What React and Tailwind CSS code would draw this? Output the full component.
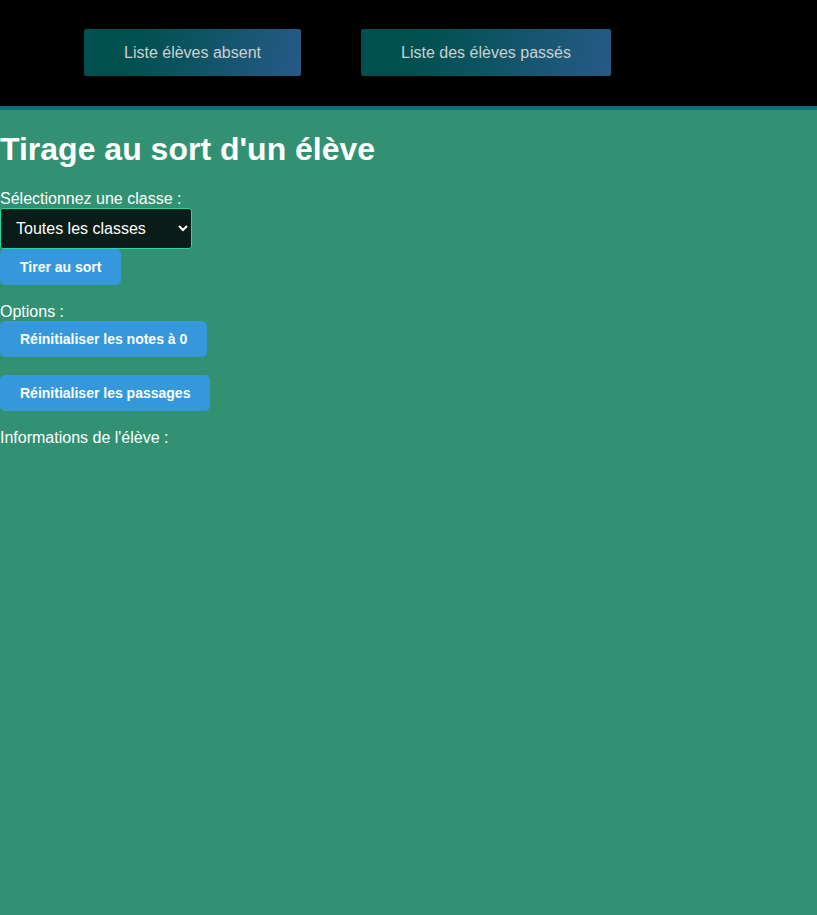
export default function App() {
  return (
    <div className="min-h-[915px] bg-[#329172] text-white font-['Liberation_Sans',Arial,sans-serif]">
      {/* top bar */}
      <nav className="h-[110px] bg-black border-b-4 border-[#0e6d72] flex items-start pt-[29px] pl-[84px] gap-[60px]">
        <button className="w-[217px] h-[47px] rounded-[2px] bg-linear-[105deg] from-[#015050] from-25% to-[#265a88] text-[#c9d1d1] text-base">
          Liste élèves absent
        </button>
        <button className="w-[250px] h-[47px] rounded-[2px] bg-linear-[105deg] from-[#015050] from-25% to-[#265a88] text-[#c9d1d1] text-base">
          Liste des élèves passés
        </button>
      </nav>

      <main>
        <h1 className="text-[32px] font-bold leading-[37px] mt-[21px] mb-[21px]">Tirage au sort d'un élève</h1>

        <label className="block text-base leading-[19px]">Sélectionnez une classe :</label>
        <select className="w-[192px] h-[41px] pl-[11px] pr-[4px] bg-[#0a1c17] border border-[#22d6a6] rounded-[3px] text-white text-base">
          <option>Toutes les classes</option>
        </select>
        <div>
          <button className="h-[36px] px-[20px] bg-[#3498db] rounded-[5px] text-sm font-bold">Tirer au sort</button>
        </div>

        <p className="text-base leading-[18px] mt-[18px]">Options :</p>
        <div className="flex flex-col items-start gap-[18px]">
          <button className="h-[36px] px-[20px] bg-[#3498db] rounded-[5px] text-sm font-bold">Réinitialiser les notes à 0</button>
          <button className="h-[36px] px-[20px] bg-[#3498db] rounded-[5px] text-sm font-bold">Réinitialiser les passages</button>
        </div>

        <p className="text-base leading-[18px] mt-[18px]">Informations de l'élève :</p>
      </main>
    </div>
  )
}
